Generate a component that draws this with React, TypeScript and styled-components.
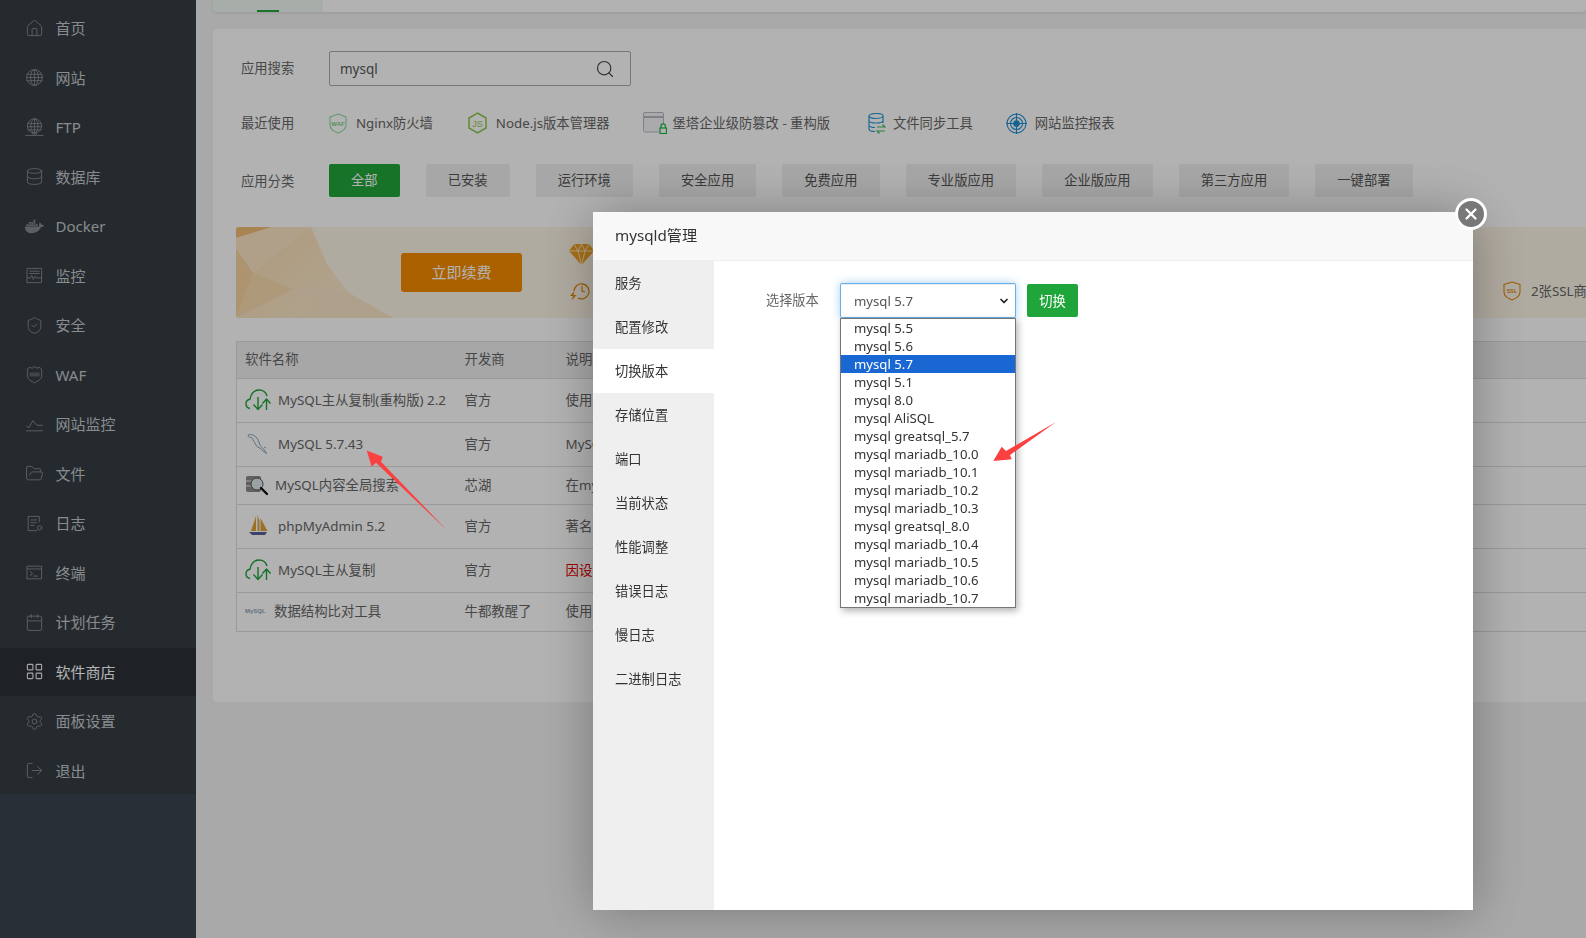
import { ReactNode } from 'react';
import styled, { createGlobalStyle } from 'styled-components';
import { Calendar, ChevronDown, Database, FolderOpen, House, LayoutGrid, LogOut, Search, Settings, ShieldCheck, X } from 'lucide-react';
import { FaDocker } from 'react-icons/fa';

const FONT = `"Noto Sans", "Noto Sans CJK SC", sans-serif`;

const GlobalStyle = createGlobalStyle`
    html, body {
        margin: 0;
        padding: 0;
        height: 100%;
        overflow: hidden;
        background: #f2f2f2;
        font-family: ${FONT};
    }
    * {
        box-sizing: border-box;
    }
`;

const Page = styled.div`
    display: flex;
    width: 1586px;
    height: 938px;
    overflow: hidden;
`;

/* ---------- sidebar ---------- */

const Sidebar = styled.aside`
    flex: 0 0 196px;
    height: 100%;
    background: #3c4450;
`;

const Nav = styled.nav`
    background: #363d43;
    height: 794px;
    padding-top: 4px;
`;

const NavItem = styled.a<{ $active?: boolean }>`
    display: flex;
    align-items: center;
    height: 48px;
    margin-bottom: 1.5px;
    padding-left: 25px;
    gap: 11.5px;
    font-size: 15px;
    line-height: 20px;
    color: ${(p) => (p.$active ? '#fff' : '#c4c8cc')};
    background: ${(p) => (p.$active ? '#2c3138' : 'transparent')};
    svg {
        flex: 0 0 19px;
        width: 19px;
        height: 19px;
        color: ${(p) => (p.$active ? '#eee' : '#858a8f')};
    }
`;

const Stroke = ({ children }: { children: ReactNode }) => (
    <svg viewBox='0 0 24 24' fill='none' stroke='currentColor' strokeWidth='1.2' strokeLinecap='round' strokeLinejoin='round'>
        {children}
    </svg>
);

const GlobeGrid = () => (
    <Stroke>
        <circle cx='12' cy='12' r='10' />
        <ellipse cx='12' cy='12' rx='5' ry='10' />
        <path d='M12 2v20M2.500 8h19M2 12h20M2.500 16h19' />
    </Stroke>
);

const FtpGlobe = () => (
    <Stroke>
        <circle cx='12' cy='10' r='9' />
        <ellipse cx='12' cy='10' rx='4.5' ry='9' />
        <path d='M12 1v18M3.5 7h17M3.5 11h17M3.5 15h17M1 22h22M9 20h6' />
    </Stroke>
);

const MonitorIcon = () => (
    <Stroke>
        <rect x='3' y='3' width='18' height='18' />
        <path d='M6 6.500h12M6 9.500h12M3 15h4l1.500-3 2 5 2-4 1.500 2H21' />
    </Stroke>
);

const WafShield = () => (
    <svg viewBox='0 0 24 24' fill='none' stroke='currentColor' strokeWidth='1.2'>
        <path d='M12 2l3 2 3-1 3 2v9c0 4-5 6.500-9 8.500-4-2-9-4.500-9-8.500V5l3-2 3 1z' />
        <path d='M5.500 9.500h13v5h-13z' fill='currentColor' stroke='none' opacity='.5' />
    </svg>
);

const TrendIcon = () => (
    <Stroke>
        <path d='M2 14l3 2 5-9 5 6h7M2 20h20' />
    </Stroke>
);

const LogIcon = () => (
    <Stroke>
        <path d='M18 10V3H4v18h11M7.500 7.500h7M7.500 11h7M7.500 14.500h4' />
        <circle cx='18.500' cy='17.500' r='2.700' />
    </Stroke>
);

const TerminalIcon = () => (
    <Stroke>
        <rect x='3' y='4' width='18' height='16' />
        <path d='M3 7.500h18M6.500 11l3 2.500-3 2.500M11 16.500h4.500' />
    </Stroke>
);

const navItems: { label: string; icon: ReactNode; active?: boolean }[] = [
    { label: '首页', icon: <House strokeWidth={1.2} /> },
    { label: '网站', icon: <GlobeGrid /> },
    { label: 'FTP', icon: <FtpGlobe /> },
    { label: '数据库', icon: <Database strokeWidth={1.2} /> },
    { label: 'Docker', icon: <FaDocker /> },
    { label: '监控', icon: <MonitorIcon /> },
    { label: '安全', icon: <ShieldCheck strokeWidth={1.2} /> },
    { label: 'WAF', icon: <WafShield /> },
    { label: '网站监控', icon: <TrendIcon /> },
    { label: '文件', icon: <FolderOpen strokeWidth={1.2} /> },
    { label: '日志', icon: <LogIcon /> },
    { label: '终端', icon: <TerminalIcon /> },
    { label: '计划任务', icon: <Calendar strokeWidth={1.2} /> },
    { label: '软件商店', icon: <LayoutGrid strokeWidth={1.4} />, active: true },
    { label: '面板设置', icon: <Settings strokeWidth={1.2} /> },
    { label: '退出', icon: <LogOut strokeWidth={1.2} /> },
];

/* ---------- main content ---------- */

const Main = styled.main`
    flex: 1;
    min-width: 0;
    padding-left: 17px;
`;

const TabCard = styled.div`
    height: 12px;
    margin-bottom: 17px;
    background: #fff;
    border-radius: 0 0 4px 4px;
    box-shadow: 0 1px 3px rgba(0, 0, 0, 0.1);
    overflow: hidden;
`;

const ActiveTab = styled.div`
    position: relative;
    width: 110px;
    height: 12px;
    background: #f0f8f3;
    display: flex;
    justify-content: center;
    align-items: flex-end;
    &::after {
        content: '';
        width: 22px;
        height: 2px;
        background: #20a53a;
    }
`;

const Card = styled.section`
    background: #fff;
    border-radius: 4px 0 0 4px;
    height: 673px;
    padding: 22px 0 0 23px;
`;

const Row = styled.div<{ $top?: number }>`
    display: flex;
    align-items: center;
    padding-left: 5px;
    margin-top: ${(p) => p.$top ?? 0}px;
`;

const RowLabel = styled.span<{ $lift?: number }>`
    flex: 0 0 88px;
    padding-bottom: ${(p) => p.$lift ?? 0}px;
    font-size: 13.3px;
    line-height: 20px;
    color: #666;
`;

const SearchBox = styled.div`
    display: flex;
    align-items: center;
    width: 302px;
    height: 35px;
    padding: 0 15px 0 10px;
    border: 1px solid #aaa;
    border-radius: 2px;
    font-size: 13.5px;
    color: #555;
    svg {
        width: 20px;
        height: 20px;
        color: #444;
        stroke-width: 1.4;
    }
`;

const SearchText = styled.span`
    flex: 1;
`;

const RecentList = styled.div`
    display: flex;
    align-items: center;
    height: 24px;
`;

const RecentItem = styled.span<{ $gap: number; $after?: number }>`
    display: flex;
    align-items: center;
    gap: ${(p) => p.$gap}px;
    margin-right: ${(p) => p.$after ?? 0}px;
    font-size: 13.3px;
    line-height: 20px;
    color: #666;
    white-space: nowrap;
`;

const Categories = styled.div`
    display: flex;
    gap: 26px;
`;

const CategoryButton = styled.button<{ $active?: boolean }>`
    height: 33px;
    padding: 0 22.05px;
    border: 0;
    border-radius: 2px;
    font-family: inherit;
    font-size: 13.3px;
    line-height: 33px;
    white-space: nowrap;
    color: ${(p) => (p.$active ? '#fff' : '#555')};
    background: ${(p) => (p.$active ? '#20a53a' : '#f0f0f0')};
`;

const Banner = styled.div`
    position: relative;
    display: flex;
    align-items: center;
    height: 91.5px;
    margin-top: 29.5px;
    padding-left: 165px;
    border-radius: 3px 0 0 3px;
    background: #fdf5e6;
    overflow: hidden;
`;

const BannerArt = styled.svg`
    position: absolute;
    left: 0;
    top: 0;
    width: 170px;
    height: 92px;
`;

const RenewButton = styled.a`
    position: relative;
    flex: 0 0 121px;
    height: 39px;
    border-radius: 3px;
    background: #f78c00;
    color: #fff;
    font-size: 15px;
    line-height: 39px;
    text-align: center;
`;

const PerkColumn = styled.div`
    display: flex;
    flex-direction: column;
    gap: 15px;
    margin-left: 47px;
`;

const SslPerk = styled.span`
    display: flex;
    align-items: center;
    gap: 10px;
    align-self: flex-end;
    margin: 0 0 17px 909px;
    font-size: 13.3px;
    line-height: 20px;
    color: #666;
    white-space: nowrap;
`;

const SoftTable = styled.table`
    width: 1350.5px;
    margin-top: 23px;
    border-collapse: collapse;
    table-layout: fixed;
    font-size: 13.4px;
    color: #666;
    border-left: 1px solid #ddd;
`;

const HeadRow = styled.tr`
    height: 37px;
    background: #f0f0f0;
    border-top: 1px solid #ddd;
    border-bottom: 1px solid #ddd;
`;

const BodyRow = styled.tr<{ $h: number }>`
    height: ${(p) => p.$h}px;
    border-bottom: 1px solid #ddd;
`;

const Th = styled.th`
    padding: 0 0 2px 8px;
    font-weight: 400;
    text-align: left;
    line-height: 20px;
`;

const Td = styled.td<{ $danger?: boolean }>`
    padding: 0 0 2px 8px;
    line-height: 20px;
    white-space: nowrap;
    overflow: hidden;
    color: ${(p) => (p.$danger ? '#e00000' : 'inherit')};
`;

const SoftName = styled.span<{ $gap: number }>`
    display: flex;
    align-items: center;
    gap: ${(p) => p.$gap}px;
    svg {
        flex: none;
    }
`;

/* ---------- coloured icons ---------- */

const NginxWaf = () => (
    <svg width='18' height='21' viewBox='0 0 18 21'>
        <path d='M9 1l8 3v8c0 4-4 6.500-8 8-4-1.500-8-4-8-8V4z' fill='none' stroke='#8fdca0' strokeWidth='1.1' />
        <text x='9' y='12.500' fontSize='6' fontWeight='700' fontFamily='Liberation Sans' textAnchor='middle' fill='#7dd08f'>WAF</text>
    </svg>
);

const NodeHex = () => (
    <svg width='19' height='22' viewBox='0 0 19 22'>
        <path d='M9.500 1l8.500 5v10l-8.500 5L1 16V6z' fill='none' stroke='#8cc84b' strokeWidth='1.5' />
        <text x='9.500' y='15' fontSize='9' fontFamily='Liberation Sans' textAnchor='middle' fill='#8cc84b'>JS</text>
    </svg>
);

const WindowLock = () => (
    <svg width='24' height='22' viewBox='0 0 24 22'>
        <path d='M16 20H2a1.500 1.500 0 0 1-1.500-1.500V2A1.500 1.500 0 0 1 2 .5h17A1.500 1.500 0 0 1 20.500 2v10' fill='#f4f4f6' stroke='#b8b8c4' strokeWidth='1' />
        <path d='M1 5h19' stroke='#b8b8c4' strokeWidth='2' />
        <rect x='17' y='16' width='6.500' height='5.500' fill='none' stroke='#18b83a' strokeWidth='1.2' />
        <path d='M18 16v-2a2.200 2.200 0 0 1 4.400 0v2' fill='none' stroke='#18b83a' strokeWidth='1.2' />
    </svg>
);

const DbSync = () => (
    <svg width='18' height='21' viewBox='0 0 18 21' fill='none'>
        <ellipse cx='8' cy='3' rx='7' ry='2.500' stroke='#2e9bd6' strokeWidth='1.200' />
        <path d='M1 3v13c0 1.500 3 2.500 6 2.500M15 3v7M1 7.500c0 1.500 3 2.500 7 2.500s7-1 7-2.500M1 12c0 1.500 3 2.500 6 2.500' stroke='#2e9bd6' strokeWidth='1.200' />
        <path d='M9 14h8l-2.500-2.500M17 18H9l2.500 2.500' stroke='#3eb55a' strokeWidth='1.200' />
    </svg>
);

const TargetIcon = () => (
    <svg width='21' height='21' viewBox='0 0 21 21' fill='none' stroke='#1f8fd1' strokeWidth='1.1'>
        <circle cx='10.500' cy='10.500' r='9.500' />
        <circle cx='10.500' cy='10.500' r='6' />
        <circle cx='10.500' cy='10.500' r='2.800' fill='#1f8fd1' />
        <path d='M10.500 0v21M0 10.500h21' />
    </svg>
);

const Diamond = () => (
    <svg width='25' height='21' viewBox='0 0 25 21'>
        <path d='M5 0h15l5 7-12.500 14L0 7z' fill='#f0a020' />
        <path d='M0 7h25M5 0l4 7 3.500 14L16 7l4-7M9 7l3.500-7L16 7' fill='none' stroke='#fff2d0' strokeWidth='.9' />
    </svg>
);

const ClockBolt = () => (
    <svg width='21' height='21' viewBox='0 0 21 21' fill='none' stroke='#e08a10' strokeWidth='1.300'>
        <path d='M5 11a7.500 7.500 0 1 1 4 7' />
        <path d='M13 6v5l3 1' />
        <path d='M5.500 11L1 16h3l-1.500 4.500L7.500 15h-3z' fill='#e08a10' stroke='none' />
    </svg>
);

const SslShield = () => (
    <svg width='18' height='20' viewBox='0 0 18 20'>
        <path d='M9 1l8 2.500V11c0 4-4 6.500-8 8-4-1.500-8-4-8-8V3.500z' fill='none' stroke='#e08a10' strokeWidth='1.100' />
        <text x='9' y='11.500' fontSize='5.500' fontWeight='700' fontFamily='Liberation Sans' textAnchor='middle' fill='#e08a10'>SSL</text>
    </svg>
);

const CloudSync = () => (
    <svg width='27' height='22' viewBox='0 0 27 22' fill='none' stroke='#1fa33a' strokeWidth='1.400'>
        <path d='M5 19.500a4.700 4.700 0 0 1 0-9.300C5.500 5 9 1 14 1c4 0 7 2.500 8 6' />
        <path d='M13 8v12M8.500 15.500L13 20.500l4.500-5' />
        <path d='M21.500 21V10M17.500 14.500l4-4.500 4 4.500' />
    </svg>
);

const Dolphin = () => (
    <svg width='24' height='22' viewBox='0 0 24 22' fill='none' stroke='#7d97ab' strokeWidth='.9'>
        <path d='M3 2c3-1 6 0 8 2s3 5 4 8c1 2 3 3 5 6l1 2c-2-1-4-3-6-5-1 0-3-1-4-3-2-3-3-6-5-8-1 1-2 1-3-2z' />
        <path d='M19 14l2 1M21 20l1 1' />
    </svg>
);

const SearchDb = () => (
    <svg width='24' height='22' viewBox='0 0 24 22'>
        <rect x='1' y='2' width='15' height='16' rx='2' fill='#8a8a8a' />
        <path d='M1 7h15M1 12h15' stroke='#e8e8e8' strokeWidth='1' />
        <circle cx='12' cy='10' r='6' fill='#dfe8ea' stroke='#555' strokeWidth='1' />
        <path d='M16 14l6 6' stroke='#111' strokeWidth='2.400' strokeLinecap='round' />
    </svg>
);

const Sails = () => (
    <svg width='27' height='22' viewBox='0 0 27 22'>
        <path d='M6 16L11 1v15zM12.500 16V0l2 6v10zM15.500 16V3l7 13z' fill='#e0a238' />
        <path d='M4 17h18l-2 3H7z' fill='#5b5f96' />
    </svg>
);

const MiniLogo = styled.span`
    flex: 0 0 24px;
    font-family: 'Liberation Sans', sans-serif;
    font-size: 6px;
    font-weight: 700;
    color: #8fa3bb;
`;

/* ---------- modal ---------- */

const Shade = styled.div`
    position: fixed;
    inset: 0;
    background: rgba(0, 0, 0, 0.3);
`;

const Modal = styled.div`
    position: fixed;
    left: 593px;
    top: 212px;
    width: 880px;
    height: 698px;
    display: flex;
    flex-direction: column;
    background: #fff;
    box-shadow: 1px 1px 50px rgba(0, 0, 0, 0.3);
`;

const ModalHeader = styled.header`
    flex: 0 0 49px;
    padding-left: 22px;
    font-size: 15.2px;
    line-height: 47px;
    color: #333;
    background: #f8f8f8;
    border-bottom: 1px solid #eee;
`;

const CloseButton = styled.button`
    position: absolute;
    top: -14px;
    right: -14px;
    display: flex;
    align-items: center;
    justify-content: center;
    width: 32px;
    height: 32px;
    padding: 0;
    border: 3px solid #fff;
    border-radius: 50%;
    background: #787878;
    color: #fff;
`;

const ModalBody = styled.div`
    flex: 1;
    display: flex;
    min-height: 0;
`;

const SideTabs = styled.ul`
    flex: 0 0 121px;
    margin: 0;
    padding: 0;
    list-style: none;
    background: #efefef;
`;

const SideTab = styled.li<{ $active?: boolean }>`
    height: 44px;
    padding-left: 22px;
    font-size: 13.3px;
    line-height: 44px;
    color: #333;
    background: ${(p) => (p.$active ? '#fff' : 'transparent')};
`;

const Pane = styled.div`
    flex: 1;
    display: flex;
    align-items: flex-start;
    padding: 22px 0 0 52px;
`;

const PaneLabel = styled.label`
    flex: 0 0 74px;
    font-size: 13.2px;
    line-height: 35px;
    color: #666;
`;

const SelectWrap = styled.div`
    position: relative;
    width: 176px;
    > svg {
        position: absolute;
        left: 158px;
        top: 12px;
        color: #222;
    }
`;

const VersionSelect = styled.select`
    display: block;
    width: 176px;
    height: 35px;
    padding: 0 13px;
    border: 1px solid #66afe9;
    border-radius: 2px;
    outline: 0;
    appearance: none;
    background: #fff;
    font-family: inherit;
    font-size: 13.2px;
    color: #555;
    box-shadow: inset 0 1px 1px rgba(0, 0, 0, 0.075), 0 0 8px rgba(102, 175, 233, 0.6);
`;

const OptionList = styled.ul`
    position: absolute;
    left: 0;
    top: 35px;
    width: 176px;
    margin: 0;
    padding: 0;
    list-style: none;
    background: #fff;
    border: 1px solid #767676;
    box-shadow: 2px 3px 7px rgba(0, 0, 0, 0.3);
`;

const Option = styled.li<{ $selected?: boolean }>`
    height: 18px;
    padding-left: 13px;
    font-size: 13.2px;
    line-height: 18px;
    white-space: nowrap;
    color: ${(p) => (p.$selected ? '#fff' : '#333')};
    background: ${(p) => (p.$selected ? '#1967d2' : 'transparent')};
`;

const SwitchButton = styled.button`
    height: 33px;
    width: 51px;
    margin: 1px 0 0 11px;
    padding: 0;
    border: 0;
    border-radius: 2px;
    background: #20a53a;
    color: #fff;
    font-family: inherit;
    font-size: 13.3px;
`;

const Annotations = styled.svg`
    position: fixed;
    left: 0;
    top: 0;
    width: 1586px;
    height: 938px;
    pointer-events: none;
`;

/* ---------- data ---------- */

const categories = ['全部', '已安装', '运行环境', '安全应用', '免费应用', '专业版应用', '企业版应用', '第三方应用', '一键部署'];

const softRows: { h: number; icon: ReactNode; gap: number; name: string; dev: string; desc: string; danger?: boolean }[] = [
    { h: 44, icon: <CloudSync />, gap: 6, name: 'MySQL主从复制(重构版) 2.2', dev: '官方', desc: '使用' },
    { h: 44, icon: <Dolphin />, gap: 9, name: 'MySQL 5.7.43', dev: '官方', desc: 'MySQL' },
    { h: 38, icon: <SearchDb />, gap: 6, name: 'MySQL内容全局搜索', dev: '芯湖', desc: '在mysql' },
    { h: 44, icon: <Sails />, gap: 6, name: 'phpMyAdmin 5.2', dev: '官方', desc: '著名' },
    { h: 44, icon: <CloudSync />, gap: 6, name: 'MySQL主从复制', dev: '官方', desc: '因设', danger: true },
    { h: 39, icon: <MiniLogo>MySQL</MiniLogo>, gap: 5, name: '数据结构比对工具', dev: '牛都教醒了', desc: '使用' },
];

const sideTabs = ['服务', '配置修改', '切换版本', '存储位置', '端口', '当前状态', '性能调整', '错误日志', '慢日志', '二进制日志'];

const versions = [
    'mysql 5.5',
    'mysql 5.6',
    'mysql 5.7',
    'mysql 5.1',
    'mysql 8.0',
    'mysql AliSQL',
    'mysql greatsql_5.7',
    'mysql mariadb_10.0',
    'mysql mariadb_10.1',
    'mysql mariadb_10.2',
    'mysql mariadb_10.3',
    'mysql greatsql_8.0',
    'mysql mariadb_10.4',
    'mysql mariadb_10.5',
    'mysql mariadb_10.6',
    'mysql mariadb_10.7',
];

const App = () => {
    return (
        <>
            <GlobalStyle />
            <Page>
                <Sidebar>
                    <Nav>
                        {navItems.map((item) => (
                            <NavItem key={item.label} $active={item.active}>
                                {item.icon}
                                {item.label}
                            </NavItem>
                        ))}
                    </Nav>
                </Sidebar>
                <Main>
                    <TabCard>
                        <ActiveTab />
                    </TabCard>
                    <Card>
                        <Row>
                            <RowLabel $lift={2}>应用搜索</RowLabel>
                            <SearchBox>
                                <SearchText>mysql</SearchText>
                                <Search />
                            </SearchBox>
                        </Row>
                        <Row $top={25}>
                            <RowLabel>最近使用</RowLabel>
                            <RecentList>
                                <RecentItem $gap={9} $after={35}><NginxWaf />Nginx防火墙</RecentItem>
                                <RecentItem $gap={9} $after={33}><NodeHex />Node.js版本管理器</RecentItem>
                                <RecentItem $gap={6} $after={38}><WindowLock />堡塔企业级防篡改 - 重构版</RecentItem>
                                <RecentItem $gap={7} $after={33}><DbSync />文件同步工具</RecentItem>
                                <RecentItem $gap={8}><TargetIcon />网站监控报表</RecentItem>
                            </RecentList>
                        </Row>
                        <Row $top={29}>
                            <RowLabel>应用分类</RowLabel>
                            <Categories>
                                {categories.map((c, i) => (
                                    <CategoryButton key={c} $active={i === 0}>{c}</CategoryButton>
                                ))}
                            </Categories>
                        </Row>
                        <Banner>
                            <BannerArt viewBox='0 0 170 92'>
                                <defs>
                                    <linearGradient id='fade' x1='0' y1='0' x2='1' y2='0.6'>
                                        <stop offset='0' stopColor='#fadcaf' />
                                        <stop offset='1' stopColor='#fcecd2' />
                                    </linearGradient>
                                </defs>
                                <path d='M0 0h75l16 37 21 28 47 27H0z' fill='url(#fade)' />
                                <path d='M0 0h36L0 11z' fill='#f3bd78' />
                                <path d='M36 0h39L17 46 0 22V11z' fill='#fce6c6' />
                                <path d='M0 22l17 24-17 45z' fill='#f8d3a0' />
                                <path d='M17 46l40 16-57 29z' fill='#f9dcb0' />
                                <path d='M57 62l24-6 33 11 45 25H60l20-14z' fill='#fbe6c8' />
                            </BannerArt>
                            <RenewButton>立即续费</RenewButton>
                            <PerkColumn>
                                <Diamond />
                                <ClockBolt />
                            </PerkColumn>
                            <SslPerk><SslShield />2张SSL商</SslPerk>
                        </Banner>
                        <SoftTable>
                            <colgroup>
                                <col width='220' />
                                <col width='101' />
                                <col />
                            </colgroup>
                            <thead>
                                <HeadRow>
                                    <Th>软件名称</Th>
                                    <Th>开发商</Th>
                                    <Th>说明</Th>
                                </HeadRow>
                            </thead>
                            <tbody>
                                {softRows.map((r) => (
                                    <BodyRow key={r.name} $h={r.h}>
                                        <Td>
                                            <SoftName $gap={r.gap}>{r.icon}{r.name}</SoftName>
                                        </Td>
                                        <Td>{r.dev}</Td>
                                        <Td $danger={r.danger}>{r.desc}</Td>
                                    </BodyRow>
                                ))}
                            </tbody>
                        </SoftTable>
                    </Card>
                </Main>
            </Page>
            <Shade />
            <Modal>
                <ModalHeader>mysqld管理</ModalHeader>
                <CloseButton>
                    <X size={18} strokeWidth={3} />
                </CloseButton>
                <ModalBody>
                    <SideTabs>
                        {sideTabs.map((t) => (
                            <SideTab key={t} $active={t === '切换版本'}>{t}</SideTab>
                        ))}
                    </SideTabs>
                    <Pane>
                        <PaneLabel>选择版本</PaneLabel>
                        <SelectWrap>
                            <VersionSelect defaultValue='mysql 5.7'>
                                {versions.map((v) => (
                                    <option key={v}>{v}</option>
                                ))}
                            </VersionSelect>
                            <ChevronDown size={12} strokeWidth={3.5} />
                            <OptionList>
                                {versions.map((v) => (
                                    <Option key={v} $selected={v === 'mysql 5.7'}>{v}</Option>
                                ))}
                            </OptionList>
                        </SelectWrap>
                        <SwitchButton>切换</SwitchButton>
                    </Pane>
                </ModalBody>
            </Modal>
            <Annotations viewBox='0 0 1586 938'>
                <path d='M366.700 450.500L382.700 456.700 381 461.700 447.700 531 376 462.700 371.700 466.700z' fill='#fb4040' />
                <path d='M993.300 461L1001.700 446.700 1006 451 1056 422 1010 455 1011.700 459.300z' fill='#fb4040' />
            </Annotations>
        </>
    );
};

export default App;
